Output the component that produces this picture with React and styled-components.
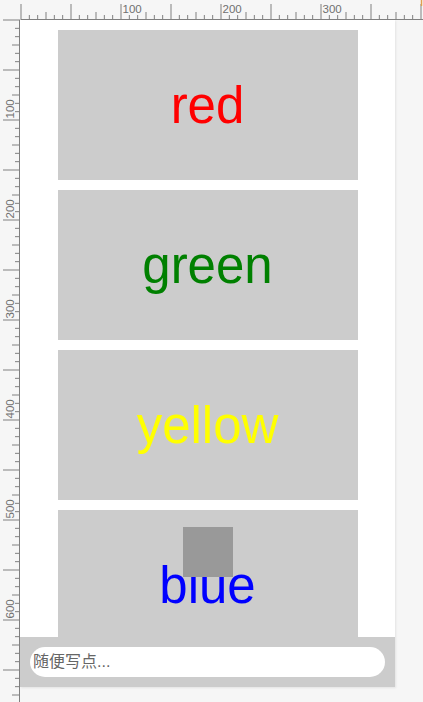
import React from "react";
import styled, { createGlobalStyle } from "styled-components";

const GlobalStyle = createGlobalStyle`
  html, body { margin: 0; padding: 0; }
  body {
    background: #f6f6f6;
    font-family: "Liberation Sans", Arial, "Noto Sans CJK SC", sans-serif;
    overflow: hidden;
  }
`;

const Workspace = styled.div`
  display: grid;
  grid-template-columns: 20px 375px 1fr;
  grid-template-rows: 20px 1fr;
  width: 423px;
  height: 702px;
  background: #f6f6f6;
  overflow: hidden;
`;

const TopRulerBox = styled.div`
  grid-column: 2 / 4;
  grid-row: 1;
  height: 20px;
  overflow: hidden;
`;

const LeftRulerBox = styled.div`
  grid-column: 1;
  grid-row: 1 / 3;
  width: 20px;
  overflow: hidden;
`;

const Device = styled.div`
  grid-column: 2;
  grid-row: 2;
  align-self: start;
  height: 667px;
  display: flex;
  flex-direction: column;
  background: #fff;
  box-shadow: 1px 1px 2px rgba(0, 0, 0, 0.08);
  overflow: hidden;
`;

const List = styled.div`
  flex: 1;
  min-height: 0;
  overflow: hidden;
  display: flex;
  flex-direction: column;
  align-items: center;
  gap: 10px;
  padding-top: 10px;
`;

const Card = styled.div`
  position: relative;
  flex-shrink: 0;
  width: 300px;
  height: 150px;
  background: #cccccc;
  display: flex;
  align-items: center;
  justify-content: center;
  font-family: "Liberation Sans", Arial, sans-serif;
  font-size: 51px;
  color: ${(p) => p.$color};
`;

const Block = styled.div`
  position: absolute;
  top: 17px;
  left: 125px;
  width: 50px;
  height: 50px;
  background: #999999;
`;

const Footer = styled.div`
  flex-shrink: 0;
  height: 50px;
  box-sizing: border-box;
  padding: 10px;
  background: #cccccc;
  display: flex;
`;

const Input = styled.input`
  flex: 1;
  height: 30px;
  box-sizing: border-box;
  border: none;
  outline: none;
  border-radius: 15px;
  padding: 0 3px;
  background: #fff;
  font-family: "Liberation Sans", "Noto Sans CJK SC", sans-serif;
  font-size: 16px;
  color: #333;
  &::placeholder {
    color: #666;
  }
`;

const TICK = "#808080";
const STEP = 25 / 3;

function TopRuler() {
  const ticks = [];
  const labels = [];
  for (let i = 0; i * STEP < 410; i++) {
    const x = 1 + i * STEP;
    const top = i % 6 === 0 ? 4 : i % 3 === 0 ? 12 : 15;
    ticks.push(
      <line key={i} x1={x} x2={x} y1={top} y2={20} stroke={TICK} strokeWidth="1" />
    );
    if (i % 12 === 0 && i > 0 && x < 380) {
      labels.push(
        <text key={"l" + i} x={x + 1.5} y={12.5} fontSize="11.5" fill="#707070"
          fontFamily="Liberation Sans, Arial, sans-serif">
          {Math.round(i * STEP)}
        </text>
      );
    }
  }
  return (
    <svg width="403" height="20" viewBox="0 0 403 20">
      <line x1="1" x2="403" y1="19.5" y2="19.5" stroke={TICK} strokeWidth="1" />
      {ticks}
      {labels}
      <line x1="401.5" x2="401.5" y1="0" y2="6" stroke="#e0a050" strokeWidth="1.5" />
    </svg>
  );
}

function LeftRuler() {
  const ticks = [];
  const labels = [];
  for (let i = 0; i * STEP < 690; i++) {
    const y = 20 + i * STEP;
    const left = i % 6 === 0 ? 3 : i % 3 === 0 ? 12 : 15;
    ticks.push(
      <line key={i} x1={left} x2={20} y1={y} y2={y} stroke={TICK} strokeWidth="1" />
    );
    if (i % 12 === 0 && i > 0) {
      labels.push(
        <text key={"l" + i} x="0" y="0" fontSize="11.5" fill="#707070"
          fontFamily="Liberation Sans, Arial, sans-serif"
          transform={`translate(14 ${y - 1.5}) rotate(-90)`}>
          {Math.round(i * STEP)}
        </text>
      );
    }
  }
  return (
    <svg width="20" height="702" viewBox="0 0 20 702">
      <line x1="19.5" x2="19.5" y1="20" y2="702" stroke={TICK} strokeWidth="1" />
      {ticks}
      {labels}
    </svg>
  );
}

const cards = [
  { label: "red", color: "red" },
  { label: "green", color: "green" },
  { label: "yellow", color: "yellow" },
  { label: "blue", color: "blue", block: true },
];

export default function App() {
  return (
    <>
      <GlobalStyle />
      <Workspace>
        <TopRulerBox>
          <TopRuler />
        </TopRulerBox>
        <LeftRulerBox>
          <LeftRuler />
        </LeftRulerBox>
        <Device>
          <List>
            {cards.map((c) => (
              <Card key={c.label} $color={c.color}>
                {c.label}
                {c.block && <Block />}
              </Card>
            ))}
          </List>
          <Footer>
            <Input placeholder="随便写点..." />
          </Footer>
        </Device>
      </Workspace>
    </>
  );
}
